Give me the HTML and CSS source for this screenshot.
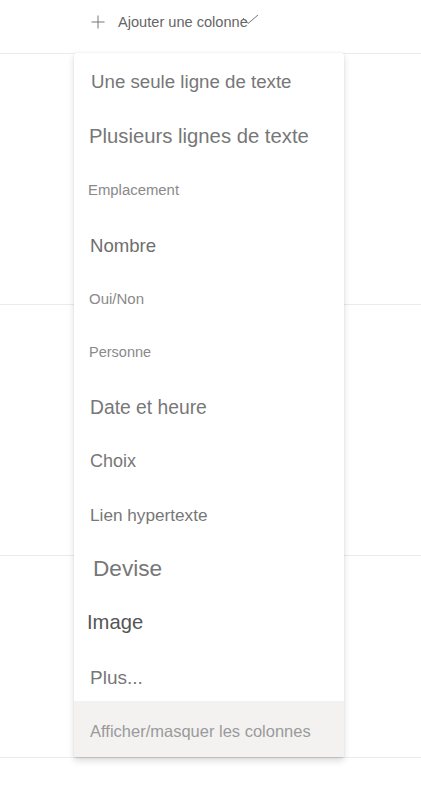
FILE: index.html
```html
<!DOCTYPE html>
<html lang="fr">
<head>
<meta charset="utf-8">
<link rel="stylesheet" href="styles.css">
</head>
<body>
<div class="page">
  <div class="header">
    <div class="add">
      <svg class="plus" width="14" height="14" viewBox="0 0 14 14"><path d="M7 0.5V13.5M0.5 7H13.5" stroke="#777" stroke-width="1" fill="none"/></svg>
      <span class="add-label">Ajouter une colonne</span>
      <svg class="check" width="17" height="11" viewBox="0 0 17 11"><path d="M1 4L6 9.5L16 1" stroke="#777" stroke-width="1" fill="none"/></svg>
    </div>
  </div>
  <div class="row r1"></div>
  <div class="row r2"></div>
  <div class="row r3"></div>

  <div class="menu">
    <ul class="items">
      <li class="item s-single">Une seule ligne de texte</li>
      <li class="item s-multi">Plusieurs lignes de texte</li>
      <li class="item small s-loc">Emplacement</li>
      <li class="item s-num">Nombre</li>
      <li class="item small s-yes">Oui/Non</li>
      <li class="item small s-person">Personne</li>
      <li class="item s-date">Date et heure</li>
      <li class="item s-choice">Choix</li>
      <li class="item s-link">Lien hypertexte</li>
      <li class="item s-currency">Devise</li>
      <li class="item s-image">Image</li>
      <li class="item s-more">Plus...</li>
    </ul>
    <div class="footer">Afficher/masquer les colonnes</div>
  </div>
</div>
</body>
</html>
```
FILE: styles.css
```css
html, body {
  margin: 0;
  padding: 0;
  background: #fff;
  font-family: "Liberation Sans", Arial, sans-serif;
}
.page {
  position: relative;
  width: 421px;
  height: 800px;
  overflow: hidden;
}
.header {
  height: 54px;
  border-bottom: 1px solid #edebe9;
  box-sizing: border-box;
  display: flex;
  align-items: center;
}
.add {
  display: flex;
  align-items: center;
  margin-left: 91px;
  margin-top: -10px;
  color: #666;
  font-size: 14.6px;
}
.plus { flex: none; }
.add-label { margin-left: 13px; }
.check { margin-left: -6px; margin-top: -4px; }
.row {
  border-bottom: 1px solid #edebe9;
  box-sizing: border-box;
}
.r1 { height: 251px; }
.r2 { height: 251px; }
.r3 { height: 202px; }

.menu {
  position: absolute;
  left: 74px;
  top: 53px;
  width: 270px;
  background: #fff;
  border-radius: 2px;
  box-shadow: 0 3.2px 7.2px rgba(0,0,0,0.132), 0 0.6px 1.8px rgba(0,0,0,0.108);
  overflow: hidden;
}
.items {
  list-style: none;
  margin: 0;
  padding: 2px 0 0;
}
.item {
  height: 54px;
  box-sizing: border-box;
  display: flex;
  align-items: center;
  padding-left: 16px;
  color: #777;
  white-space: nowrap;
}
.small { color: #8a8a8a; padding-left: 15px; }
.s-single { font-size: 18.7px; padding-left: 17px; }
.s-multi { font-size: 20.3px; padding-left: 15px; }
.s-loc { font-size: 14.9px; padding-left: 14px; }
.s-num { font-size: 18.6px; color: #6e6e6e; padding-top: 3px; }
.s-yes { font-size: 15px; }
.s-person { font-size: 14.5px; }
.s-date { font-size: 19.3px; padding-top: 3px; }
.s-choice { font-size: 18px; padding-top: 3px; }
.s-link { font-size: 17.2px; padding-top: 2px; }
.s-currency { font-size: 22.6px; padding-left: 19px; padding-top: 2px; }
.s-image { font-size: 20.2px; color: #555; padding-left: 13px; }
.s-more { font-size: 19px; height: 52px; padding-top: 5px; }
.footer {
  height: 56px;
  background: #f3f2f1;
  display: flex;
  align-items: center;
  padding-left: 16px;
  padding-top: 4px;
  box-sizing: border-box;
  font-size: 16.5px;
  color: #9a9a9a;
}
```
